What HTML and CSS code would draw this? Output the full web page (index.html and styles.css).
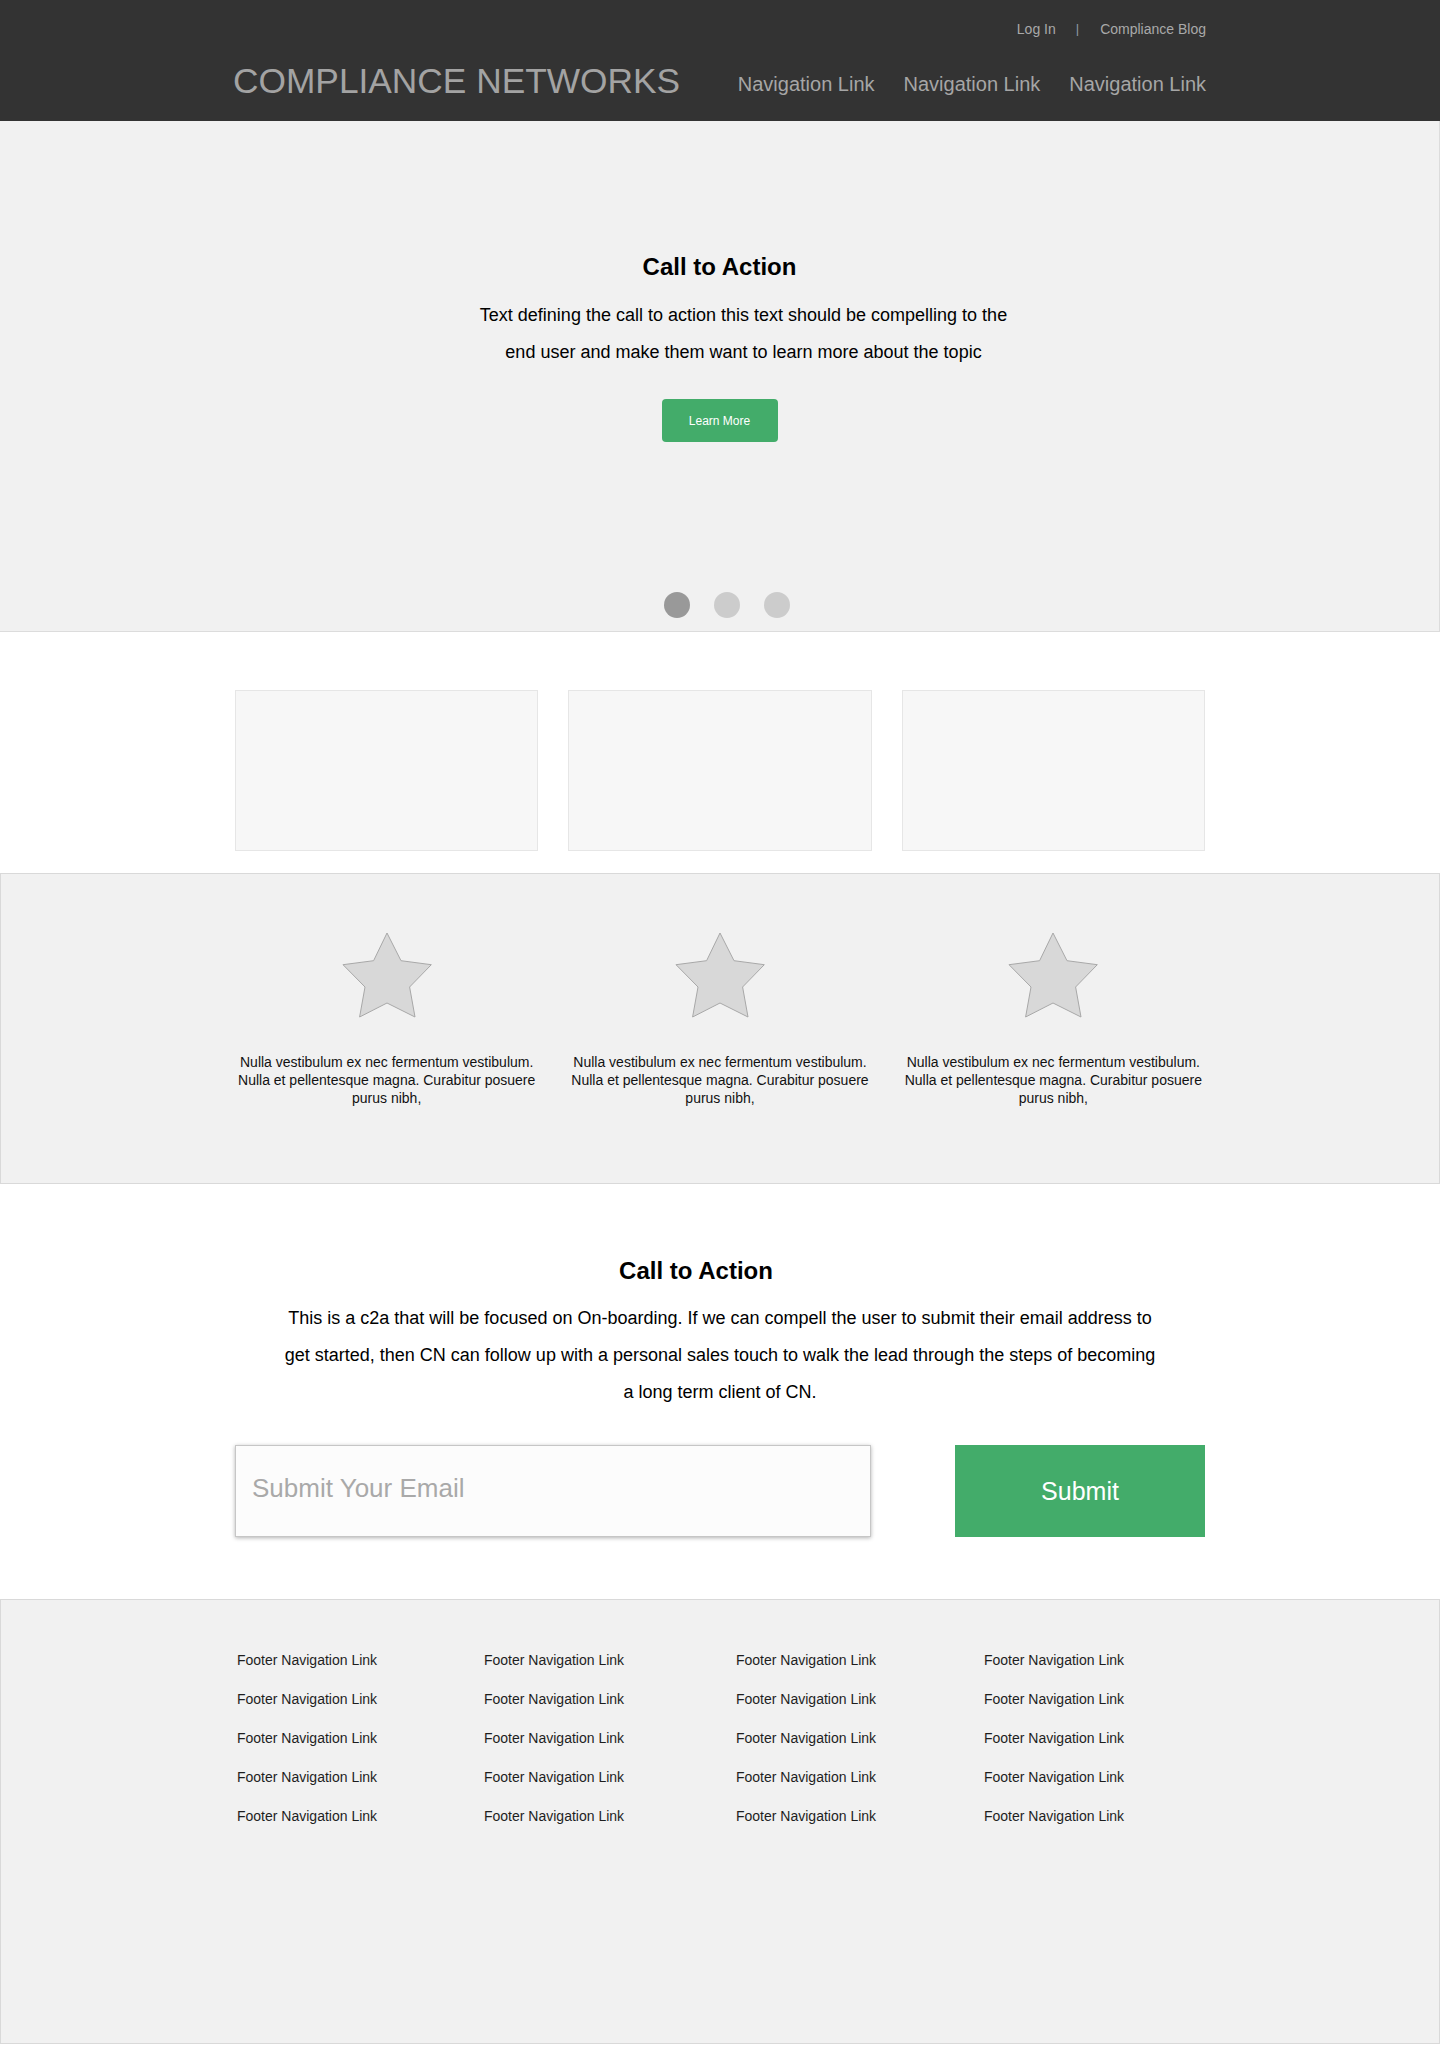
FILE: index.html
```html
<!DOCTYPE html>
<html lang="en">
<head>
<meta charset="utf-8">
<title>Compliance Networks</title>
<link rel="stylesheet" href="styles.css">
</head>
<body>
<header class="site-header">
  <div class="container">
    <div class="utility">
      <a href="#" class="utility-link">Log In</a>
      <span class="utility-sep">|</span>
      <a href="#" class="utility-link">Compliance Blog</a>
    </div>
    <div class="mainbar">
      <div class="logo">COMPLIANCE NETWORKS</div>
      <nav class="mainnav">
        <a href="#" class="nav-link">Navigation Link</a>
        <a href="#" class="nav-link">Navigation Link</a>
        <a href="#" class="nav-link">Navigation Link</a>
      </nav>
    </div>
  </div>
</header>

<section class="hero">
  <div class="hero-body">
    <h1 class="hero-title">Call to Action</h1>
    <p class="hero-text">Text defining the call to action this text should be compelling to the end user and make them want to learn more about the topic</p>
    <a href="#" class="btn-learn">Learn More</a>
  </div>
  <div class="dots">
    <span class="dot dot-active"></span>
    <span class="dot"></span>
    <span class="dot"></span>
  </div>
</section>

<section class="cards">
  <div class="container card-grid">
    <div class="card"></div>
    <div class="card"></div>
    <div class="card"></div>
  </div>
</section>

<section class="features">
  <div class="container feature-grid">
    <div class="feature">
      <svg class="star" width="90" height="86" viewBox="0 0 90 86"><polygon points="45,1 59,28.7 89.3,32.7 67.6,55 73,85 45,71 17.6,85 23,55 1,32.7 31.6,28.7" /></svg>
      <p class="feature-text">Nulla vestibulum ex nec fermentum vestibulum. Nulla et pellentesque magna. Curabitur posuere purus nibh,</p>
    </div>
    <div class="feature">
      <svg class="star" width="90" height="86" viewBox="0 0 90 86"><polygon points="45,1 59,28.7 89.3,32.7 67.6,55 73,85 45,71 17.6,85 23,55 1,32.7 31.6,28.7" /></svg>
      <p class="feature-text">Nulla vestibulum ex nec fermentum vestibulum. Nulla et pellentesque magna. Curabitur posuere purus nibh,</p>
    </div>
    <div class="feature">
      <svg class="star" width="90" height="86" viewBox="0 0 90 86"><polygon points="45,1 59,28.7 89.3,32.7 67.6,55 73,85 45,71 17.6,85 23,55 1,32.7 31.6,28.7" /></svg>
      <p class="feature-text">Nulla vestibulum ex nec fermentum vestibulum. Nulla et pellentesque magna. Curabitur posuere purus nibh,</p>
    </div>
  </div>
</section>

<section class="signup">
  <div class="container">
    <h2 class="signup-title">Call to Action</h2>
    <p class="signup-text">This is a c2a that will be focused on On-boarding. If we can compell the user to submit their email address to get started, then CN can follow up with a personal sales touch to walk the lead through the steps of becoming a long term client of CN.</p>
    <form class="signup-form">
      <input class="email-input" type="email" placeholder="Submit Your Email">
      <button class="btn-submit" type="button">Submit</button>
    </form>
  </div>
</section>

<footer class="site-footer">
  <div class="container footer-grid">
    <ul class="footer-col">
      <li><a href="#">Footer Navigation Link</a></li>
      <li><a href="#">Footer Navigation Link</a></li>
      <li><a href="#">Footer Navigation Link</a></li>
      <li><a href="#">Footer Navigation Link</a></li>
      <li><a href="#">Footer Navigation Link</a></li>
    </ul>
    <ul class="footer-col">
      <li><a href="#">Footer Navigation Link</a></li>
      <li><a href="#">Footer Navigation Link</a></li>
      <li><a href="#">Footer Navigation Link</a></li>
      <li><a href="#">Footer Navigation Link</a></li>
      <li><a href="#">Footer Navigation Link</a></li>
    </ul>
    <ul class="footer-col">
      <li><a href="#">Footer Navigation Link</a></li>
      <li><a href="#">Footer Navigation Link</a></li>
      <li><a href="#">Footer Navigation Link</a></li>
      <li><a href="#">Footer Navigation Link</a></li>
      <li><a href="#">Footer Navigation Link</a></li>
    </ul>
    <ul class="footer-col">
      <li><a href="#">Footer Navigation Link</a></li>
      <li><a href="#">Footer Navigation Link</a></li>
      <li><a href="#">Footer Navigation Link</a></li>
      <li><a href="#">Footer Navigation Link</a></li>
      <li><a href="#">Footer Navigation Link</a></li>
    </ul>
  </div>
</footer>
</body>
</html>
```

FILE: styles.css
```css
* { box-sizing: border-box; }

html, body {
  margin: 0;
  padding: 0;
  background: #ffffff;
  font-family: "Liberation Sans", Arial, Helvetica, sans-serif;
  color: #111;
}

a { text-decoration: none; }

.container {
  width: 970px;
  margin: 0 auto;
}

/* Header */
.site-header {
  background: #333333;
  height: 121px;
  padding-top: 19px;
}

.utility {
  display: flex;
  justify-content: flex-end;
  align-items: center;
  height: 20px;
  font-size: 14px;
  line-height: 20px;
  margin-right: -1px;
}

.utility-link { color: #a9a9a9; }

.utility-sep {
  color: #8f9aa6;
  margin: 0 21px 0 20px;
  font-size: 13px;
}

.mainbar {
  display: flex;
  justify-content: space-between;
  align-items: flex-start;
  margin-top: 21px;
}

.logo {
  font-size: 35.3px;
  line-height: 42px;
  color: #a3a3a3;
  margin-left: -2px;
}

.mainnav {
  display: flex;
  gap: 29px;
  margin-top: 12px;
  margin-right: -1px;
}

.nav-link {
  font-size: 20px;
  line-height: 24px;
  color: #a6a6a6;
}

/* Hero */
.hero {
  background: #f1f1f1;
  height: 511px;
  border-bottom: 1px solid #dcdcdc;
  border-right: 1px solid #dcdcdc;
  display: flex;
  flex-direction: column;
  align-items: center;
}

.hero-body {
  padding-top: 132px;
  display: flex;
  flex-direction: column;
  align-items: center;
  text-align: center;
}

.hero-title {
  margin: 0;
  font-size: 24px;
  line-height: 28px;
  font-weight: bold;
  color: #000;
}

.hero-text {
  margin: 16px 0 0 48px;
  max-width: 548px;
  font-size: 18px;
  line-height: 37px;
  color: #000;
}

.btn-learn {
  margin-top: 28px;
  display: flex;
  align-items: center;
  justify-content: center;
  width: 116px;
  height: 43px;
  background: #43ac6a;
  border-radius: 4px;
  color: #ffffff;
  font-size: 12px;
}

.dots {
  margin-top: auto;
  margin-bottom: 13px;
  margin-left: 14px;
  display: flex;
  gap: 24px;
}

.dot {
  width: 26px;
  height: 26px;
  border-radius: 50%;
  background: #cccccc;
}

.dot-active { background: #999999; }

/* Cards */
.cards {
  padding: 58px 0 22px;
}

.card-grid {
  display: grid;
  grid-template-columns: repeat(3, 1fr);
  gap: 30px;
}

.card {
  height: 161px;
  background: #f7f7f7;
  border: 1px solid #e6e6e6;
}

/* Features */
.features {
  background: #f1f1f1;
  border: 1px solid #d9d9d9;
  padding: 58px 0 76px;
}

.feature-grid {
  display: grid;
  grid-template-columns: repeat(3, 1fr);
  gap: 30px;
}

.feature {
  display: flex;
  flex-direction: column;
  align-items: center;
  text-align: center;
}

.star polygon {
  fill: #d8d8d8;
  stroke: #a8a8a8;
  stroke-width: 1;
}

.feature-text {
  margin: 35px 0 0;
  font-size: 14px;
  line-height: 18px;
  color: #111;
}

/* Signup */
.signup {
  padding: 73px 0 62px;
}

.signup .container {
  display: flex;
  flex-direction: column;
  align-items: center;
  text-align: center;
}

.signup-title {
  margin: 0 48px 0 0;
  font-size: 24px;
  line-height: 28px;
  font-weight: bold;
  color: #000;
}

.signup-text {
  margin: 15px 0 0;
  max-width: 878px;
  font-size: 18px;
  line-height: 37px;
  color: #000;
}

.signup-form {
  margin-top: 34px;
  width: 100%;
  display: flex;
  justify-content: space-between;
}

.email-input {
  width: 636px;
  height: 92px;
  margin: 0;
  border: 1px solid #c6c6c6;
  background: #fcfcfc;
  box-shadow: 0 1px 4px rgba(0, 0, 0, 0.3);
  padding: 0 16px 6px;
  font-family: "Liberation Sans", Arial, Helvetica, sans-serif;
  font-size: 26px;
  color: #333;
  outline: none;
}

.email-input::placeholder { color: #a9a9a9; }

.btn-submit {
  width: 250px;
  height: 92px;
  margin: 0;
  border: none;
  background: #43ac6a;
  color: #ffffff;
  font-family: "Liberation Sans", Arial, Helvetica, sans-serif;
  font-size: 25px;
  cursor: pointer;
}

/* Footer */
.site-footer {
  background: #f1f1f1;
  border: 1px solid #d9d9d9;
  padding: 41px 0 207px;
}

.footer-grid {
  display: grid;
  grid-template-columns: 247px 252px 248px 1fr;
  padding-left: 2px;
}

.footer-col {
  list-style: none;
  margin: 0;
  padding: 0;
}

.footer-col li {
  font-size: 14px;
  line-height: 39px;
}

.footer-col a { color: #1e1e1e; }
```
